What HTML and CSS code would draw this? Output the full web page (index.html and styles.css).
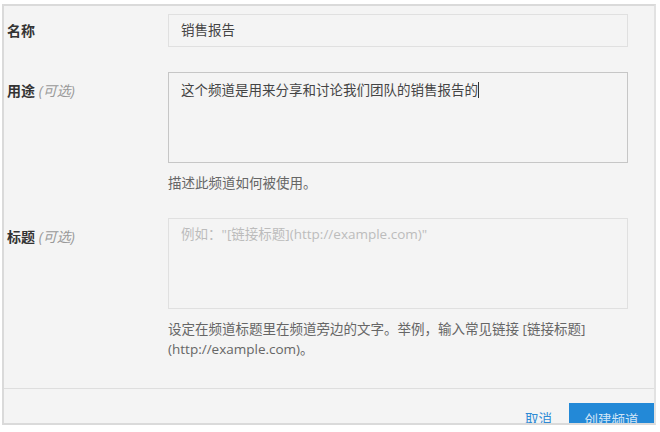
FILE: index.html
```html
<!DOCTYPE html>
<html lang="zh">

<head>
    <meta charset="UTF-8">
    <title>创建频道</title>
    <link rel="stylesheet" href="styles.css">
</head>

<body>
    <div class="panel">
        <div class="form">
            <div class="row row-input">
                <label class="label">名称</label>
                <div class="control">
                    <div class="field field-input">销售报告</div>
                </div>
            </div>

            <div class="row">
                <label class="label">用途 <span class="valgfri">(可选)</span></label>
                <div class="control">
                    <div class="field field-area aktiv">这个频道是用来分享和讨论我们团队的销售报告的<span class="caret"></span></div>
                    <p class="help">描述此频道如何被使用。</p>
                </div>
            </div>

            <div class="row">
                <label class="label">标题 <span class="valgfri">(可选)</span></label>
                <div class="control">
                    <div class="field field-area placeholder">例如："[链接标题](http://example.com)"</div>
                    <p class="help">设定在频道标题里在频道旁边的文字。举例，输入常见链接 [链接标题] (http://example.com)。</p>
                </div>
            </div>
        </div>

        <div class="footer">
            <button class="knap-link">取消</button>
            <button class="knap-primary">创建频道</button>
        </div>
    </div>
</body>

</html>
```

FILE: styles.css
```css
* {
    box-sizing: border-box;
    margin: 0;
}

body {
    background-color: #fff;
    padding: 4px 0 0 2px;
    font-family: "Open Sans", "Noto Sans CJK SC", sans-serif;
    color: #333;
}

.panel {
    width: 654px;
    height: 421px;
    border: 2px solid #dadada;
    border-right-color: #e2e2e2;
    background-color: #f4f4f4;
    overflow: hidden;
}

.form {
    padding: 8px 26px 29px 3px;
}

.row {
    display: flex;
}

.row + .row {
    margin-top: 25px;
}

.row-input {
    align-items: center;
}

.label {
    width: 161px;
    flex-shrink: 0;
    font-size: 14px;
    font-weight: bold;
    line-height: 20px;
    color: #333;
    padding-top: 9px;
}

.row-input .label {
    padding-top: 0;
}

.valgfri {
    font-weight: normal;
    font-style: italic;
    color: #999;
}

.control {
    width: 460px;
}

.field {
    border: 1px solid #e0e0e0;
    font-size: 13.5px;
    line-height: 20px;
    color: #444;
    padding: 0 12px;
}

.field-input {
    height: 33px;
    line-height: 31px;
}

.field-area {
    height: 91px;
    padding-top: 7px;
}

.aktiv {
    border-color: #c6c6c6;
}

.placeholder {
    color: #bcbcbc;
    padding-top: 5px;
}

.caret {
    display: inline-block;
    width: 1px;
    height: 16px;
    background-color: #333;
    vertical-align: -3px;
}

.help {
    margin-top: 10px;
    font-size: 13.5px;
    line-height: 20px;
    color: #666;
}

.footer {
    border-top: 1px solid #dedede;
    padding-top: 14px;
    display: flex;
    justify-content: flex-end;
    align-items: flex-start;
    gap: 17px;
}

.knap-link {
    border: none;
    background: none;
    padding: 0;
    font-family: inherit;
    font-size: 13.5px;
    line-height: 32px;
    color: #2f8ad4;
    cursor: pointer;
}

.knap-primary {
    width: 85px;
    height: 34px;
    border: none;
    border-radius: 0;
    background-color: #2389d7;
    font-family: inherit;
    font-size: 13.5px;
    line-height: 32px;
    color: rgba(255, 255, 255, 0.8);
    cursor: pointer;
}
```
